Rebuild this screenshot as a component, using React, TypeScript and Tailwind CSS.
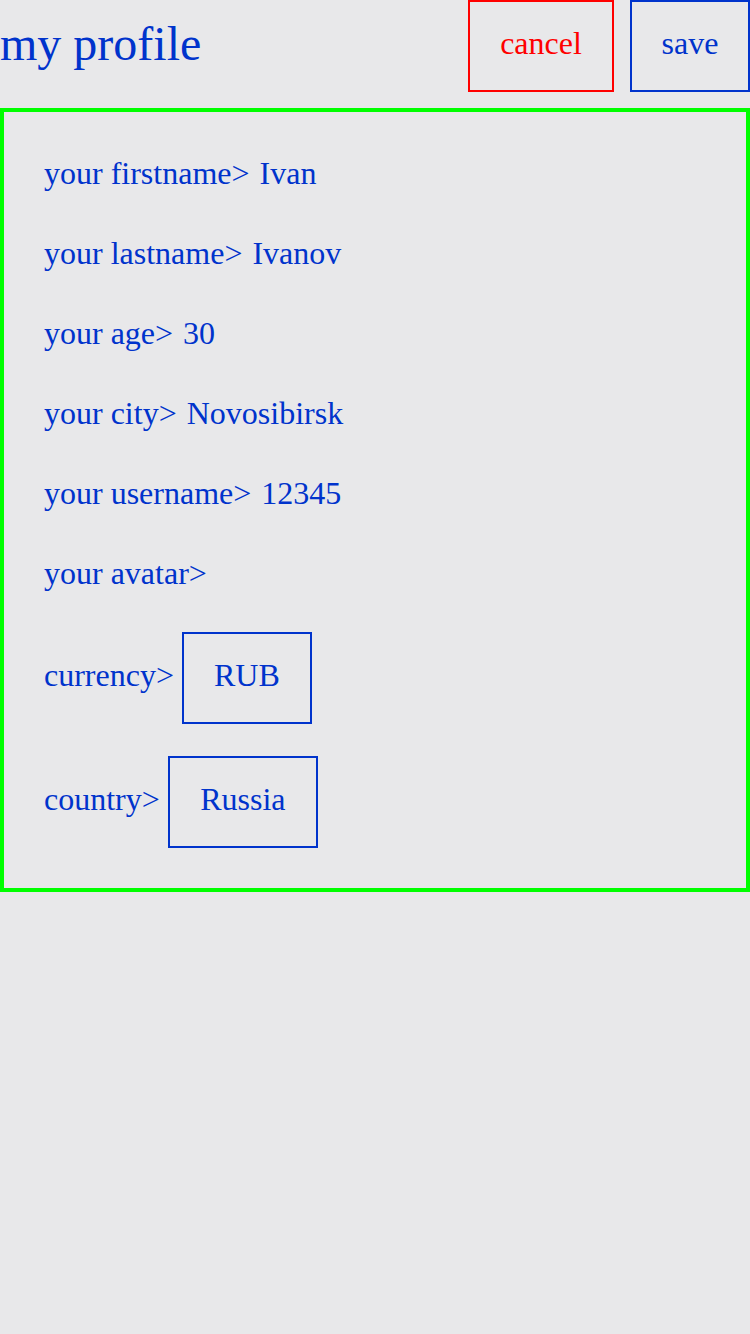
import React from "react";

const serif = { fontFamily: '"Liberation Serif", "Times New Roman", serif' };

export default function App() {
  const rows: [string, string][] = [
    ["your firstname>", "Ivan"],
    ["your lastname>", "Ivanov"],
    ["your age>", "30"],
    ["your city>", "Novosibirsk"],
    ["your username>", "12345"],
    ["your avatar>", ""],
  ];
  return (
    <div className="min-h-[1334px] w-[750px] bg-[#e8e8ea] text-[#0033cc]" style={serif}>
      <header className="flex h-[92px] items-center">
        <h1 className="flex-1 pb-[4px] text-[48px] leading-none">my profile</h1>
        <button className="ml-[1px] flex h-[92px] w-[146px] items-center justify-center border-2 border-[#ff0000] pb-[6px] text-[32px] text-[#ff0000]">
          cancel
        </button>
        <button className="ml-4 flex h-[92px] w-[120px] items-center justify-center border-2 border-[#0033cc] pb-[6px] text-[32px] text-[#0033cc]">
          save
        </button>
      </header>
      <section className="mt-4 border-4 border-[#00ff00] pl-10 pt-[21px] pb-10 text-[32px]">
        {rows.map(([label, value]) => (
          <div key={label} className="flex h-[80px] items-center">
            <span>{label}</span>
            {value ? <span className="ml-[10px]">{value}</span> : null}
          </div>
        ))}
        <div className="mt-[19px] flex h-[92px] items-center">
          <span className="pb-[6px]">currency&gt;</span>
          <div className="ml-2 flex h-[92px] items-center border-2 border-[#0033cc] px-[30px] pb-[6px]">RUB</div>
        </div>
        <div className="mt-8 flex h-[92px] items-center">
          <span className="pb-[6px]">country&gt;</span>
          <div className="ml-2 flex h-[92px] w-[150px] items-center justify-center border-2 border-[#0033cc] pb-[6px]">Russia</div>
        </div>
      </section>
    </div>
  );
}
